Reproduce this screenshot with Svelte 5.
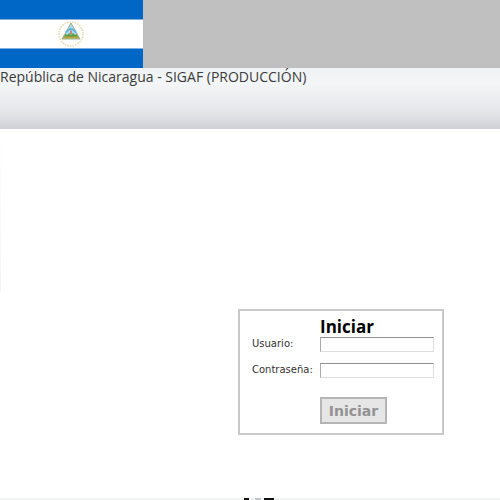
<script>
  let user = $state('');
  let password = $state('');
</script>

<div class="page">
  <header>
    <div class="banner">
      <svg class="flag" viewBox="0 0 143 68" role="img" aria-label="Nicaragua">
        <rect width="143" height="68" fill="#fff" />
        <rect width="143" height="19.5" fill="#0067c6" />
        <rect y="48.5" width="143" height="19.5" fill="#0067c6" />
        <circle cx="71" cy="34" r="12" fill="none" stroke="#e0cf8c" stroke-width="1.5" stroke-dasharray="1.6 1" opacity=".75" />
        <path d="M71 23 80 39H62Z" fill="#a9dcee" stroke="#8f9a70" stroke-width=".8" />
        <path d="M66 32.5Q71 25.5 76 32.5" fill="none" stroke="#55b2da" stroke-width="1.6" />
        <path d="M63.5 38 65.5 34 67.5 35 69 33 71 35 73 33 75 35 76.5 34 78.5 38Z" fill="#5f9c3e" />
        <path d="M63 38.5H79L78 36.5H64Z" fill="#b5a53a" />
        <path d="M71 30.5V34" stroke="#d86b68" stroke-width="1.6" />
      </svg>
    </div>
    <div class="title">República de Nicaragua - SIGAF (PRODUCCIÓN)</div>
  </header>

  <main>
    <div class="rail"></div>
    <form onsubmit={(e) => e.preventDefault()}>
      <h1>Iniciar</h1>
      <label for="user">Usuario:</label>
      <input id="user" type="text" bind:value={user} />
      <label for="password">Contraseña:</label>
      <input id="password" type="password" bind:value={password} />
      <button type="submit">Iniciar</button>
    </form>
  </main>

  <footer>
    <svg width="32" height="2" viewBox="0 0 32 2" aria-hidden="true">
      <path d="M1 0H6V2H1ZM21 0H31V2H21Z" fill="#111" />
      <path d="M12 0H18V2H12Z" fill="#bcc5cc" />
    </svg>
  </footer>
</div>

<style>
  :global(body) {
    margin: 0;
    background: #fff;
  }
  .page {
    display: flex;
    flex-direction: column;
    min-height: 100vh;
    font-family: "DejaVu Sans", Verdana, sans-serif;
    color: #333;
  }
  .banner {
    background: #c0c0c0;
  }
  .flag {
    display: block;
    width: 143px;
    height: 68px;
  }
  .title {
    box-sizing: border-box;
    min-height: 61px;
    font: 14px/17px "Open Sans", sans-serif;
    color: #3b3b3b;
    background: linear-gradient(#f0f3f3 0, #f3f5f6 25%, #e3e4e8 75%, #d0d1d8 100%);
  }
  main {
    flex: 1;
    display: flex;
    align-items: flex-start;
  }
  .rail {
    width: 1px;
    height: 162px;
    background: linear-gradient(#fff, #f1f4f6);
  }
  form {
    box-sizing: border-box;
    width: 206px;
    margin: 180px 56px 0 auto;
    padding: 6px 8px 9px 12px;
    border: 2px solid #c9c9c9;
    display: grid;
    grid-template-columns: 68px 1fr;
    row-gap: 11px;
  }
  h1 {
    grid-column: 2;
    margin: 0 0 -11px;
    font: bold 17px/20px "Open Sans", sans-serif;
    color: #000;
  }
  label {
    font-size: 10px;
    line-height: 13px;
    white-space: nowrap;
  }
  input {
    box-sizing: border-box;
    width: 100%;
    height: 15px;
    padding: 0 2px;
    border: 1px solid #ddd;
    border-top-color: #8f8f8f;
    border-left-color: #aaa;
    border-radius: 0;
    background: #fff;
    font: 10px "DejaVu Sans", sans-serif;
  }
  button {
    grid-column: 2;
    justify-self: start;
    box-sizing: border-box;
    width: 67px;
    height: 27px;
    margin-top: 8px;
    padding: 0;
    border: 2px solid #b5b5b5;
    border-radius: 0;
    background: #e6e6e6;
    color: #929292;
    font: bold 14px "DejaVu Sans", Verdana, sans-serif;
  }
  footer {
    height: 2px;
    padding-left: 243px;
    background: #f0f4f3;
  }
  footer svg {
    display: block;
  }
</style>
